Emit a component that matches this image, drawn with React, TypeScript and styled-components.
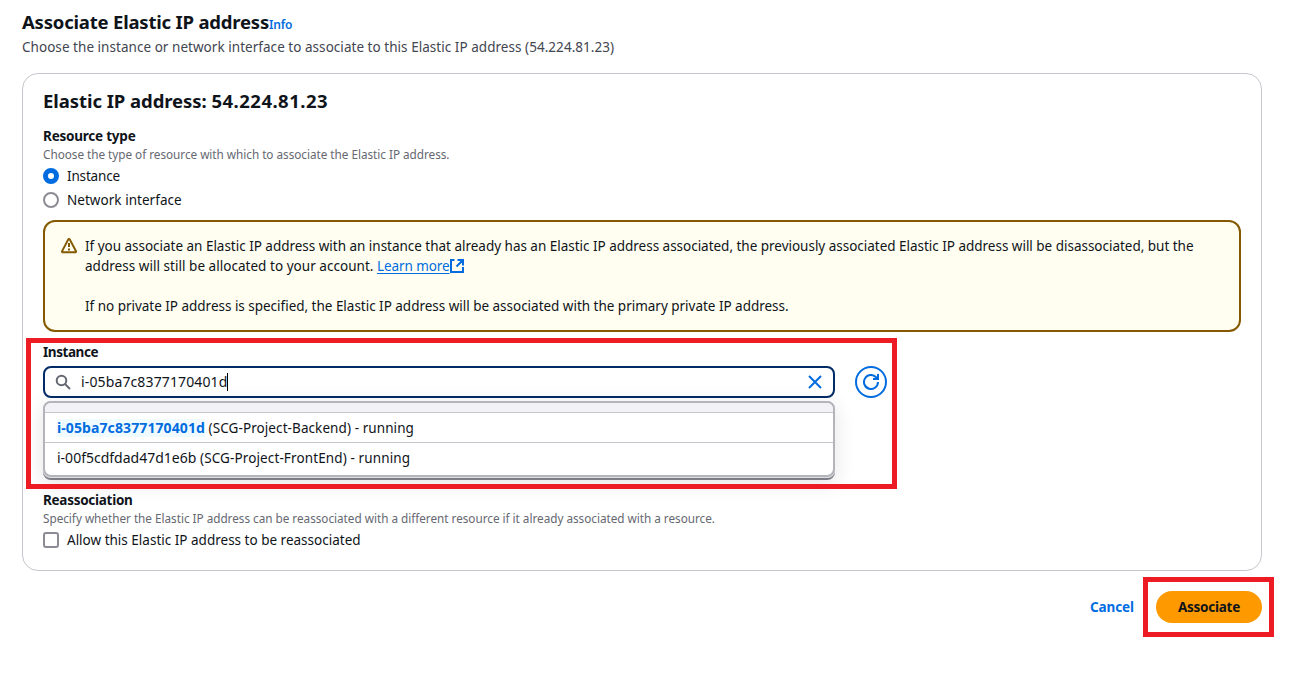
import React from "react";
import styled, { createGlobalStyle } from "styled-components";

const GlobalStyle = createGlobalStyle`
  * { box-sizing: border-box; }
  body {
    margin: 0;
    background: #fff;
    color: #0f141a;
    font-family: "Noto Sans", "Open Sans", sans-serif;
    font-size: 13.5px;
    line-height: 20px;
  }
`;

const Page = styled.main`
  width: 1294px;
  height: 682px;
  padding: 10px 32px 0 22px;
  overflow: hidden;
`;

const Text = styled.span<{ $track?: number }>`
  letter-spacing: ${(p) => p.$track ?? 0}px;
  white-space: pre;
`;

const PageHeader = styled.header`
  display: flex;
  flex-direction: column;
  gap: 3px;
`;

const TitleRow = styled.div`
  display: flex;
  align-items: baseline;
  height: 24px;
`;

const Title = styled.h1`
  margin: 0;
  font-size: 18.5px;
  line-height: 24px;
  font-weight: 700;
`;

const InfoLink = styled.a`
  color: #006ce0;
  font-size: 12px;
  line-height: 16px;
  font-weight: 600;
`;

const Description = styled.p`
  margin: 0;
  color: #424650;
`;

const Card = styled.section`
  height: 498px;
  margin-top: 16px;
  padding: 15px 20px 0;
  border: 1px solid #c6c6cd;
  border-radius: 16px;
`;

const CardTitle = styled.h2`
  margin: 0 0 13px;
  font-size: 18.5px;
  line-height: 24px;
  font-weight: 700;
`;

const Label = styled.div`
  font-size: 13.5px;
  line-height: 20px;
  font-weight: 700;
`;

const Hint = styled.div`
  color: #656871;
  font-size: 11.75px;
  line-height: 16px;
`;

const Choice = styled.label`
  display: flex;
  align-items: center;
  gap: 8px;
  height: 20px;
  margin-top: 4px;
`;

const Radio = styled.span<{ $checked?: boolean }>`
  width: 16px;
  height: 16px;
  border-radius: 50%;
  border: ${(p) => (p.$checked ? "5px solid #006ce0" : "2px solid #8c8c94")};
  background: #fff;
`;

const Checkbox = styled.span`
  width: 16px;
  height: 16px;
  border: 2px solid #8c8c94;
  border-radius: 3px;
`;

const Alert = styled.div`
  display: flex;
  gap: 8px;
  height: 112px;
  margin-top: 10px;
  padding: 14px 16px;
  border: 2px solid #855900;
  border-radius: 12px;
  background: #fffef0;

  svg { margin-top: 2px; flex: none; }
`;

const AlertBody = styled.div`
  display: flex;
  flex-direction: column;
`;

const AlertLine = styled.div`
  display: flex;
  height: 20px;
`;

const LearnMore = styled.a`
  display: flex;
  color: #006ce0;

  span { text-decoration: underline; text-underline-offset: 2px; }
`;

const InstanceField = styled.div`
  position: relative;
  height: 138px;
  margin-top: 10px;
`;

const InputRow = styled.div`
  display: flex;
  gap: 20px;
  margin-top: 4px;
`;

const SearchInput = styled.div`
  display: flex;
  align-items: center;
  width: 792px;
  height: 32px;
  padding: 0 10px;
  border: 2px solid #002b66;
  border-radius: 8px;
`;

const InputValue = styled.div`
  display: flex;
  align-items: center;
  flex: 1;
  margin-left: 10px;
  font-size: 14px;
`;

const Caret = styled.i`
  width: 1px;
  height: 18px;
  margin-left: -1px;
  background: #000;
`;

const RefreshButton = styled.button`
  display: flex;
  align-items: center;
  justify-content: center;
  width: 32px;
  height: 32px;
  padding: 0;
  border: 2px solid #006ce0;
  border-radius: 50%;
  background: #fff;
`;

const MenuBacking = styled.div`
  position: absolute;
  top: 59px;
  left: 0;
  width: 792px;
  height: 79px;
  border-radius: 8px;
  border-bottom: 2px solid #7d7d87;
  box-shadow: 0 4px 20px 1px rgba(0, 7, 22, 0.1);
  background: #b4b4bb;
`;

const Menu = styled.ul`
  height: 76px;
  margin: 0;
  padding: 0;
  list-style: none;
  overflow: hidden;
  border: 2px solid #b4b4bb;
  border-radius: 8px;
  background: #fff;
  box-shadow: 0 1px 0 #dedee3;
`;

const MenuHeader = styled.li`
  height: 10px;
  background: #f3f3f7;
  border-bottom: 1px solid #c6c6cd;
`;

const Option = styled.li`
  display: flex;
  align-items: center;
  height: 30px;
  padding: 0 12px;
  border-bottom: 1px solid #c6c6cd;

  &:last-child { border-bottom: 0; }
`;

const InstanceId = styled.span`
  font-size: 14px;
`;

const Match = styled.mark`
  color: #006ce0;
  background: #f0fbff;
  font-size: 14px;
  font-weight: 700;
  line-height: 18px;
`;

const Highlight = styled.div<{ $x: number; $y: number; $w: number; $h: number }>`
  position: absolute;
  left: ${(p) => p.$x}px;
  top: ${(p) => p.$y}px;
  width: ${(p) => p.$w}px;
  height: ${(p) => p.$h}px;
  border: 5px solid #ed1c24;
  pointer-events: none;
`;

const Reassociation = styled.div`
  position: relative;
  margin-top: 10px;
`;

const Footer = styled.footer`
  position: relative;
  display: flex;
  justify-content: flex-end;
  align-items: center;
  height: 32px;
  margin-top: 20px;
  gap: 22px;
`;

const CancelButton = styled.button`
  padding: 0;
  border: 0;
  background: none;
  color: #006ce0;
  font: 700 13.5px/20px "Noto Sans", sans-serif;
`;

const PrimaryButton = styled.button`
  width: 106px;
  height: 32px;
  padding: 0;
  border: 0;
  border-radius: 16px;
  background: #ff9900;
  color: #0f141a;
  font: 700 13.5px/20px "Noto Sans", sans-serif;
`;

const WarningIcon = () => (
  <svg width="16" height="16" viewBox="0 0 16 16" fill="none" stroke="#855900" strokeWidth="2" strokeLinejoin="round">
    <path d="M7.15 1.6 1.1 13.1c-.3.55.1 1.2.75 1.2h12.3c.65 0 1.05-.65.75-1.2L8.85 1.6c-.35-.65-1.35-.65-1.7 0Z" />
    <path d="M8 5v4M8 10.5v2" />
  </svg>
);

const ExternalIcon = () => (
  <svg width="15" height="16" viewBox="1 0 15 16" fill="none" stroke="#006ce0" strokeWidth="2">
    <path d="M14 9v5H2V2h3.5M8.5 2H14v5.5M14 2 7.5 8.5" />
  </svg>
);

const SearchIcon = () => (
  <svg width="16" height="16" viewBox="0 0 16 16" fill="none" stroke="#656871" strokeWidth="2">
    <circle cx="6.5" cy="6.5" r="4.8" />
    <path d="m10 10 5 5" />
  </svg>
);

const ClearIcon = () => (
  <svg width="16" height="16" viewBox="0 0 16 16" fill="none" stroke="#006ce0" strokeWidth="2">
    <path d="m2 2 12 12M14 2 2 14" />
  </svg>
);

const RefreshIcon = () => (
  <svg width="16" height="16" viewBox="0 0 16 16" fill="none" stroke="#006ce0" strokeWidth="2">
    <path d="M15 8a7 7 0 1 1-2.2-5.1L15 5" />
    <path d="M15 0v5h-5" />
  </svg>
);

export default function App() {
  return (
    <Page>
      <GlobalStyle />
      <PageHeader>
        <TitleRow>
          <Title><Text $track={-0.2}>Associate Elastic IP address</Text></Title>
          <InfoLink><Text $track={-0.2}>Info</Text></InfoLink>
        </TitleRow>
        <Description>
          <Text $track={0.04}>Choose the instance or network interface to associate to this Elastic IP address (54.224.81.23)</Text>
        </Description>
      </PageHeader>

      <Card>
        <CardTitle><Text $track={-0.06}>Elastic IP address: </Text><Text $track={0.48}>54.224.81.23</Text></CardTitle>
        <Label><Text $track={-0.22}>Resource type</Text></Label>
        <Hint><Text $track={-0.028}>Choose the type of resource with which to associate the Elastic IP address.</Text></Hint>
        <Choice><Radio $checked /><Text $track={-0.16}>Instance</Text></Choice>
        <Choice><Radio /><Text $track={0.04}>Network interface</Text></Choice>

        <Alert>
          <WarningIcon />
          <AlertBody>
            <AlertLine>
              <Text $track={-0.018}>If you associate an Elastic IP address with an instance that already has an Elastic IP address associated, the previously associated Elastic IP address will be disassociated, but the</Text>
            </AlertLine>
            <AlertLine>
              <Text $track={0.034}>{"address will still be allocated to your account. "}</Text>
              <LearnMore><Text $track={-0.08}>Learn more</Text><ExternalIcon /></LearnMore>
            </AlertLine>
            <AlertLine />
            <AlertLine>
              <Text $track={-0.018}>If no private IP address is specified, the Elastic IP address will be associated with the primary private IP address.</Text>
            </AlertLine>
          </AlertBody>
        </Alert>

        <InstanceField>
          <Label><Text $track={-0.44}>Instance</Text></Label>
          <InputRow>
            <SearchInput>
              <SearchIcon />
              <InputValue><Text $track={0.13}>i-05ba7c8377170401d</Text><Caret /></InputValue>
              <ClearIcon />
            </SearchInput>
            <RefreshButton><RefreshIcon /></RefreshButton>
          </InputRow>
          <MenuBacking>
            <Menu>
              <MenuHeader />
              <Option>
                <Match><Text $track={0.1}>i-05ba7c8377170401d</Text></Match>
                <Text $track={0.085}> (SCG-Project-Backend) - running</Text>
              </Option>
              <Option>
                <InstanceId><Text $track={0}>i-00f5cdfdad47d1e6b</Text></InstanceId>
                <Text $track={0.12}> (SCG-Project-FrontEnd) - running</Text>
              </Option>
            </Menu>
          </MenuBacking>
          <Highlight $x={-17} $y={-4} $w={871} $h={151} />
        </InstanceField>

        <Reassociation>
          <Label><Text $track={-0.28}>Reassociation</Text></Label>
          <Hint><Text $track={-0.022}>Specify whether the Elastic IP address can be reassociated with a different resource if it already associated with a resource.</Text></Hint>
          <Choice><Checkbox /><Text $track={0.005}>Allow this Elastic IP address to be reassociated</Text></Choice>
        </Reassociation>
      </Card>

      <Footer>
        <CancelButton><Text $track={-0.1}>Cancel</Text></CancelButton>
        <PrimaryButton><Text $track={-0.26}>Associate</Text></PrimaryButton>
        <Highlight $x={1121} $y={-14} $w={131} $h={60} />
      </Footer>
    </Page>
  );
}
